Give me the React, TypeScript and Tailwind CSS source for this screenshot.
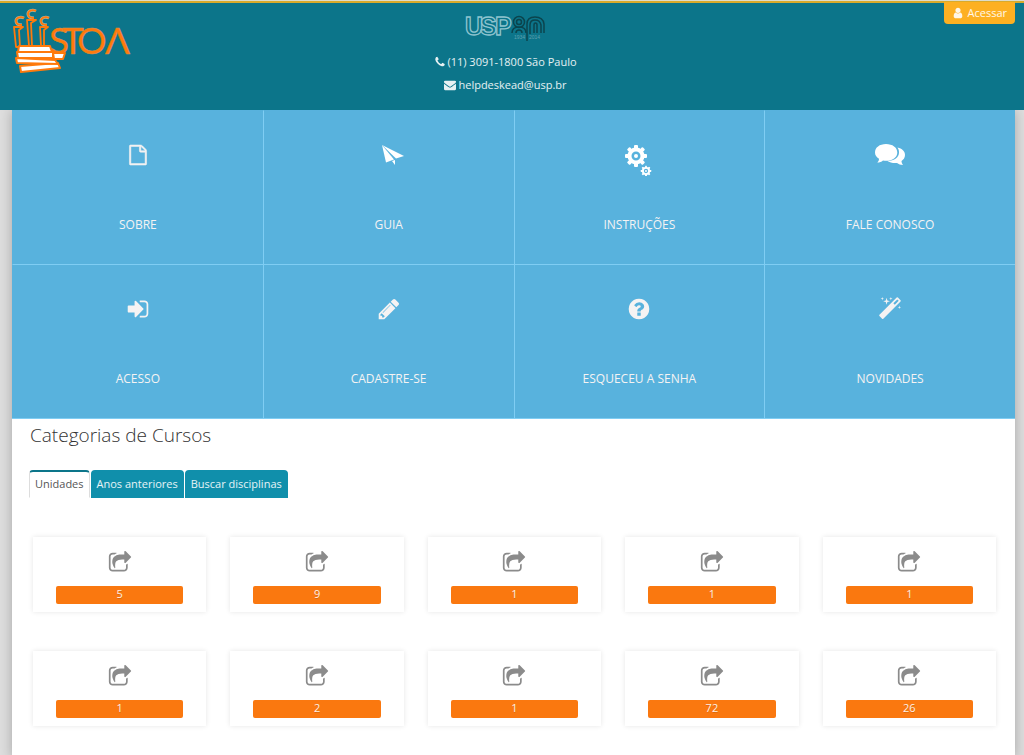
import { useState } from "react";
import type { ReactNode } from "react";

const paths = {
  file: "M1596 380q28 28 48 76t20 88v1152q0 40-28 68t-68 28h-1344q-40 0-68-28t-28-68v-1600q0-40 28-68t68-28h896q40 0 88 20t76 48zm-444-244v376h376q-10-29-22-41l-313-313q-12-12-41-22zm384 1528v-1024h-416q-40 0-68-28t-28-68v-416h-768v1536h1280z",
  signIn:
    "M1312 896q0 26-19 45l-544 544q-19 19-45 19t-45-19-19-45v-288h-448q-26 0-45-19t-19-45v-384q0-26 19-45t45-19h448v-288q0-26 19-45t45-19 45 19l544 544q19 19 19 45zm352-352v704q0 119-84.5 203.5t-203.5 84.5h-320q-13 0-22.5-9.5t-9.5-22.5q0-4-1-20t-.5-26.5 3-23.5 10-19.5 20.5-6.5h320q66 0 113-47t47-113v-704q0-66-47-113t-113-47h-312l-11.5-1-11.5-3-8-5.5-7-9-2-13.5q0-4-1-20t-.5-26.5 3-23.5 10-19.5 20.5-6.5h320q119 0 203.5 84.5t84.5 203.5z",
  pencil:
    "M491 1536l91-91-235-235-91 91v107h128v128h107zm523-928q0-22-22-22-10 0-17 7l-542 542q-7 7-7 17 0 22 22 22 10 0 17-7l542-542q7-7 7-17zm-54-192l416 416-832 832h-416v-416zm683 96q0 53-37 90l-166 166-416-416 166-165q36-38 90-38 53 0 91 38l235 234q37 39 37 91z",
  question:
    "M1024 1376v-192q0-14-9-23t-23-9h-192q-14 0-23 9t-9 23v192q0 14 9 23t23 9h192q14 0 23-9t9-23zm256-672q0-88-55.5-163t-138.5-116-170-41q-243 0-371 213-15 24 8 42l132 100q7 6 19 6 16 0 25-12 53-68 86-92 34-24 86-24 48 0 85.5 26t37.5 59q0 38-20 61t-68 45q-63 28-115.5 86.5t-52.5 125.5v36q0 14 9 23t23 9h192q14 0 23-9t9-23q0-19 21.5-49.5t54.5-49.5q32-18 49-28.5t46-35 44.5-48 28-60.5 12.5-81zm384 192q0 209-103 385.5t-279.5 279.5-385.5 103-385.5-103-279.5-279.5-103-385.5 103-385.5 279.5-279.5 385.5-103 385.5 103 279.5 279.5 103 385.5z",
  magic:
    "M1254 581l293-293-107-107-293 293zm447-293q0 27-18 45l-1286 1286q-18 18-45 18t-45-18l-198-198q-18-18-18-45t18-45l1286-1286q18-18 45-18t45 18l198 198q18 18 18 45zm-1351-190l98 30-98 30-30 98-30-98-98-30 98-30 30-98zm350 162l196 60-196 60-60 196-60-196-196-60 196-60 60-196zm930 478l98 30-98 30-30 98-30-98-98-30 98-30 30-98zm-640-640l98 30-98 30-30 98-30-98-98-30 98-30 30-98z",
  envelope:
    "M1792 710v794q0 66-47 113t-113 47h-1472q-66 0-113-47t-47-113v-794q44 49 101 87 362 246 497 345 57 42 92.5 65.5t94.5 48 110 24.5h2q51 0 110-24.5t94.5-48 92.5-65.5q170-123 498-345 57-39 100-87zm0-294q0 79-49 151t-122 123q-376 261-468 325-10 7-42.5 31t-54 38.5-52 32.5-57.5 27-50 9h-2q-23 0-50-9t-57.5-27-52-32.5-54-38.5-42.5-31q-91-64-262-182.5t-205-142.5q-62-42-117-115.5t-55-136.5q0-78 41.5-130t118.5-52h1472q65 0 112.5 47t47.5 113z",
  phone:
    "M1600 1240q0 27-10 70.5t-21 68.5q-21 50-122 106-94 51-186 51-27 0-53-3.5t-57.5-12.5-47-14.5-55.5-20.5-49-18q-98-35-175-83-127-79-264-216t-216-264q-48-77-83-175-3-9-18-49t-20.5-55.5-14.5-47-12.5-57.5-3.5-53q0-92 51-186 56-101 106-122 25-11 68.5-21t70.5-10q14 0 21 3 18 6 53 76 11 19 30 54t35 63.5 31 53.5q3 4 17.5 25t21.5 35.5 7 28.5q0 20-28.5 50t-62 55-62 53-28.5 46q0 9 5 22.5t8.5 20.5 14 24 11.5 19q76 137 174 235t235 174q2 1 19 11.5t24 14 20.5 8.5 22.5 5q18 0 46-28.5t53-62 55-62 50-28.5q14 0 28.5 7t35.5 21.5 25 17.5q25 15 53.5 31t63.5 35 54 30q70 35 76 53 3 7 3 21z",
  user: "M1536 1399q0 109-62.5 187t-150.5 78h-854q-88 0-150.5-78t-62.5-187q0-85 8.5-160.5t31.5-152 58.5-131 94-89 134.5-34.5q131 128 313 128t313-128q76 0 134.5 34.5t94 89 58.5 131 31.5 152 8.5 160.5zm-256-887q0 159-112.5 271.5t-271.5 112.5-271.5-112.5-112.5-271.5 112.5-271.5 271.5-112.5 271.5 112.5 112.5 271.5z",
  share:
    "M1472 989v259q0 119-84.5 203.5t-203.5 84.5h-832q-119 0-203.5-84.5t-84.5-203.5v-832q0-119 84.5-203.5t203.5-84.5h255q13 0 22.5 9.5t9.5 22.5q0 27-26 32-77 26-133 60-10 4-16 4h-112q-66 0-113 47t-47 113v832q0 66 47 113t113 47h832q66 0 113-47t47-113v-214q0-19 18-29 28-13 54-37 16-16 35-8 21 9 21 29zm237-496l-384 384q-18 19-45 19-12 0-25-5-39-17-39-59v-192h-160q-323 0-438 131-119 137-74 473 3 23-20 34-8 2-12 2-16 0-26-13-10-14-21-31t-39.5-68.5-49.5-99.5-38.5-114-17.5-122q0-49 3.5-91t14-90 28-88 47-81.5 68.5-74 94.5-61.5 124.5-48.5 159.5-30.5 196.5-11h160v-192q0-42 39-59 13-5 25-5 26 0 45 19l384 384q19 19 19 45t-19 45z",
};

function Icon({ name, className }: { name: keyof typeof paths; className: string }) {
  return (
    <svg viewBox="0 0 1792 1792" fill="currentColor" className={className} aria-hidden="true">
      <path d={paths[name]} />
    </svg>
  );
}

function PlaneIcon() {
  return (
    <svg viewBox="-8 0 32 24" fill="#fff" className="h-6 w-8" aria-hidden="true">
      <path d="M1 2 23 13 15 15.500Z" />
      <path d="M1 2 13 16.500 5 19.500Z" />
      <path d="M11 18 14 17V22Z" />
    </svg>
  );
}

const teeth = [0, 45, 90, 135, 180, 225, 270, 315];

function Gear({ x, y, scale }: { x: number; y: number; scale: number }) {
  return (
    <g transform={`translate(${x} ${y}) scale(${scale})`}>
      {teeth.map((angle) => (
        <rect key={angle} x="-2" y="-11" width="4" height="5" rx="1" transform={`rotate(${angle})`} />
      ))}
      <circle r="6.500" fill="none" stroke="#fff" strokeWidth="4" />
      <circle r="2" />
    </g>
  );
}

function GearsIcon() {
  return (
    <svg viewBox="0 0 28 42" fill="#fff" className="h-[42px] w-7 shrink-0" aria-hidden="true">
      <Gear x={11} y={22} scale={1} />
      <Gear x={21} y={37} scale={0.48} />
    </svg>
  );
}

function CommentsIcon() {
  return (
    <svg viewBox="0 0 30 24" fill="#fff" className="h-6 w-[30px]" aria-hidden="true">
      <path d="M22.500 4.500C27 5.500 30 8 30 12c0 2.600-1.300 4.600-3.500 6 0 1.500.5 2.500 1.500 4-2.500 0-4.300-.8-6-2-4 .3-7.500-.5-9.500-2 7 0 11.500-4 11.500-8.500 0-2-.5-3.500-1.500-5Z" />
      <path d="M11 1C17.500 1 22.300 4.500 22.300 9.500S17.500 17.800 11 17.800c-1 0-2-.1-3-.3C6.500 19 4.500 19.600 2.300 19.600c1-1 1.700-2.200 1.700-3.800C1.500 14.200 0 12.200 0 9.500 0 4.500 4.500 1 11 1Z" />
    </svg>
  );
}

function StoaLogo() {
  return (
    <svg viewBox="0 0 120 66" className="h-[66px] w-[120px]" role="img" aria-label="Stoa">
      {/* three readers standing behind the pile of books */}
      <g fill="none" stroke="#a9b5a5" strokeWidth="3" strokeLinejoin="round">
        <path d="M12 10C8 8 4 10 4 13s3 4 6 4M24 3C20 1 16 3 16 6s3 4 6 4M37 10C33 8 29 10 29 13s3 4 6 4" />
      </g>
      <g fill="#0c758a" stroke="#ff7a0c" strokeWidth="1.800" strokeLinejoin="round">
        <path d="M2 19H11L7 22 8 39H4Z" />
        <path d="M15 12H24L19 15 20 38H17Z" />
        <path d="M28 19H36L32 22V38H29Z" />
        <path
          d="M12 10C8 8 4 10 4 13s3 4 6 4M24 3C20 1 16 3 16 6s3 4 6 4M37 10C33 8 29 10 29 13s3 4 6 4"
          fill="none"
        />
      </g>
      <text
        x="37 50 65 93"
        y="46"
        fontSize="37"
        fill="#ff7a0c"
        stroke="#d99350"
        strokeWidth=".4"
        fontFamily="Lato, sans-serif"
      >
        STOΛ
      </text>
      <g fill="#fff" stroke="#ff7a0c" strokeWidth="2" strokeLinejoin="round">
        <path d="M8 58 46 55 48 60 9 64Z" />
        <path d="M4 50 43 52 46 56 5 55Z" />
        <path d="M41 45H53L51 51H42Z" />
        <path d="M5 44H41V50H6Z" />
        <path d="M7 38H38L40 44H6Z" />
      </g>
    </svg>
  );
}

function UspLogo() {
  return (
    <svg viewBox="0 -4 82 32" className="h-8 w-[82px]" role="img" aria-label="USP 80">
      <text
        x="1 16 31"
        y="21"
        fontSize="25"
        fontWeight="700"
        fill="#0c758a"
        stroke="#8fc4cf"
        strokeWidth="1.300"
        fontFamily="Liberation Sans, sans-serif"
      >
        USP
      </text>
      <g fill="none" stroke="#0b444d" strokeWidth="1.500">
        <circle cx="55" cy="8" r="5.500" />
        <circle cx="55" cy="8" r="2.500" />
        <path d="M48 19q0-6 7-6t7 6M52 19q0-3 3-3t3 3" />
        <path d="M63 27V10q0-7 8-7t9 7v9M66 20V11q0-5 5-5t6 5v8M70 19v-8q0-2 1.500-2t1.500 2v8" />
      </g>
      <text x="50" y="25" fontSize="5" fill="#5fa0ad" fontFamily="Liberation Sans, sans-serif">
        1934
      </text>
      <text x="65" y="25" fontSize="5" fill="#5fa0ad" fontFamily="Liberation Sans, sans-serif">
        2014
      </text>
    </svg>
  );
}

const tiles: { label: string; icon: ReactNode }[] = [
  { label: "SOBRE", icon: <Icon name="file" className="h-5 w-5 overflow-visible stroke-current stroke-[50]" /> },
  { label: "GUIA", icon: <PlaneIcon /> },
  { label: "INSTRUÇÕES", icon: <GearsIcon /> },
  { label: "FALE CONOSCO", icon: <CommentsIcon /> },
  { label: "ACESSO", icon: <Icon name="signIn" className="h-6 w-6" /> },
  { label: "CADASTRE-SE", icon: <Icon name="pencil" className="h-6 w-6" /> },
  { label: "ESQUECEU A SENHA", icon: <Icon name="question" className="h-6 w-6" /> },
  { label: "NOVIDADES", icon: <Icon name="magic" className="h-6 w-6" /> },
];

const tabs = ["Unidades", "Anos anteriores", "Buscar disciplinas"];

const counts = [5, 9, 1, 1, 1, 1, 2, 1, 72, 26];

export default function App() {
  const [active, setActive] = useState(0);

  return (
    <div className="flex min-h-screen flex-col bg-[#dedede] font-['Open_Sans',sans-serif] text-[11px]">
      <header className="relative z-10 border-t border-[#dcdccb] bg-[#0c758a] text-white/90">
        <div className="grid h-[109px] grid-cols-3 items-start border-t-2 border-[#d9aa2b] pr-[9px] pl-3">
          <a href="#" className="mt-[5px] justify-self-start">
            <StoaLogo />
          </a>
          <div className="flex flex-col items-center pt-[7px] pr-4">
            <UspLogo />
            <p className="mt-2 flex items-center gap-px leading-[23px]">
              <Icon name="phone" className="h-3 w-3" />
              (11) 3091-1800 São Paulo
            </p>
            <a href="mailto:helpdeskead@usp.br" className="flex items-center gap-[2px] leading-[23px]">
              <Icon name="envelope" className="h-3 w-3" />
              helpdeskead@usp.br
            </a>
          </div>
          <button className="-mt-px flex h-[22px] items-center gap-1 justify-self-end rounded-b bg-[#fdb022] px-2">
            <Icon name="user" className="h-3 w-3" />
            Acessar
          </button>
        </div>
      </header>

      <main className="mr-[9px] ml-3 grow bg-white shadow-[0_0_12px_rgba(0,0,0,0.25)]">
        <nav className="grid grid-cols-4 border-b border-[#7fcdf3] bg-[#58b2dd] text-xs">
          {tiles.map((tile, i) => (
            <a
              key={tile.label}
              href="#"
              className={`flex h-[154px] flex-col items-center border-t border-l pt-[27px] text-[#f5f3f3] ${
                i < 4 ? "border-t-transparent" : "border-t-[#7fcdf3]"
              } ${i % 4 === 0 ? "border-l-transparent" : "border-l-[#7fcdf3]"}`}
            >
              <span className="flex h-[34px] items-center">{tile.icon}</span>
              <span className="mt-[43px] leading-5">{tile.label}</span>
            </a>
          ))}
        </nav>

        <h2 className="px-[18px] pt-[2px] text-[19px] leading-7 font-light text-[#333]">
          Categorias de Cursos
        </h2>

        <div role="tablist" className="mt-[21px] flex gap-px px-[17px]">
          {tabs.map((tab, i) => (
            <button
              key={tab}
              role="tab"
              aria-selected={i === active}
              onClick={() => setActive(i)}
              className={`h-7 rounded-t border border-t-2 px-[5px] ${
                i === active
                  ? "border-x-[#ddd] border-t-[#0c758a] border-b-white bg-white text-[#555]"
                  : "border-[#108fab] bg-[#108fab] text-white/90"
              }`}
            >
              {tab}
            </button>
          ))}
        </div>

        <div className="grid grid-cols-5 gap-x-6 gap-y-[39px] pt-[39px] pr-[19px] pb-8 pl-[21px]">
          {counts.map((count, i) => (
            <a
              key={i}
              href="#"
              className="flex h-[75px] flex-col items-center bg-white px-[23px] pt-[14px] shadow-[0_0_5px_rgba(0,0,0,0.1)]"
            >
              <Icon name="share" className="h-6 w-6 text-[#8b8b8b]" />
              <span className="mt-[11px] h-[18px] w-full rounded-xs bg-[#fa780f] text-center leading-4 text-white/90 text-shadow-2xs">
                {count}
              </span>
            </a>
          ))}
        </div>
      </main>
    </div>
  );
}
